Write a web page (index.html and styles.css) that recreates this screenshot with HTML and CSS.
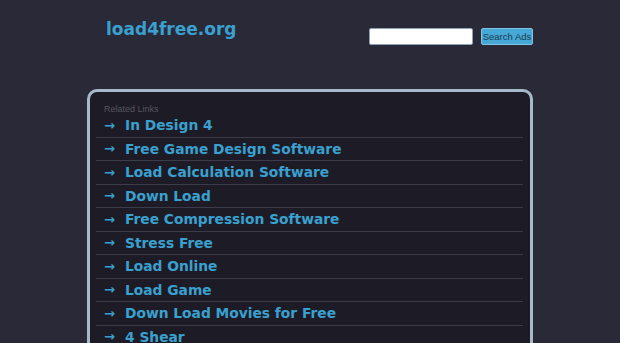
FILE: index.html
```html
<!DOCTYPE html>
<html>
<head>
<meta charset="utf-8">
<link rel="stylesheet" href="styles.css">
</head>
<body>
<div class="wrap">
  <div class="header">
    <div class="logo">load4free.org</div>
    <form class="search">
      <input class="search-input" type="text">
      <button class="search-btn" type="button">Search Ads</button>
    </form>
  </div>
  <div class="panel">
    <div class="panel-title">Related Links</div>
    <ul class="links">
      <li class="link"><span class="arrow">→</span><span class="label">In Design 4</span></li>
      <li class="link"><span class="arrow">→</span><span class="label">Free Game Design Software</span></li>
      <li class="link"><span class="arrow">→</span><span class="label">Load Calculation Software</span></li>
      <li class="link"><span class="arrow">→</span><span class="label">Down Load</span></li>
      <li class="link"><span class="arrow">→</span><span class="label">Free Compression Software</span></li>
      <li class="link"><span class="arrow">→</span><span class="label">Stress Free</span></li>
      <li class="link"><span class="arrow">→</span><span class="label">Load Online</span></li>
      <li class="link"><span class="arrow">→</span><span class="label">Load Game</span></li>
      <li class="link"><span class="arrow">→</span><span class="label">Down Load Movies for Free</span></li>
      <li class="link"><span class="arrow">→</span><span class="label">4 Shear</span></li>
    </ul>
  </div>
</div>
</body>
</html>
```
FILE: styles.css
```css
html, body {
  margin: 0;
  padding: 0;
  background: #2a2938;
  overflow: hidden;
}
body {
  font-family: "DejaVu Sans", sans-serif;
}
.wrap {
  width: 446px;
  margin: 0 auto;
}
.header {
  display: flex;
  justify-content: space-between;
  align-items: flex-start;
  height: 89px;
}
.logo {
  margin: 18px 0 0 19px;
  font-weight: bold;
  font-size: 17px;
  line-height: 22px;
  color: #3aa0cf;
}
.search {
  display: flex;
  gap: 8px;
  margin: 28px 0 0 0;
}
.search-input {
  width: 104px;
  height: 17px;
  box-sizing: border-box;
  border: 1px solid #8fa3b6;
  border-radius: 2px;
  background: #fff;
  padding: 0;
  margin: 0;
}
.search-btn {
  width: 52px;
  height: 17px;
  box-sizing: border-box;
  border: 1px solid #7fc4e4;
  border-radius: 2px;
  background: #45a8d6;
  color: #1d3a50;
  font-family: "Liberation Sans", Arial, sans-serif;
  font-size: 9.5px;
  padding: 0;
  margin: 0;
}
.panel {
  border: 3px solid #a6b9c9;
  border-bottom: none;
  border-radius: 10px 10px 0 0;
  background: #1d1c26;
  padding: 12px 7px 20px 6px;
  height: 300px;
}
.panel-title {
  font-family: "Liberation Sans", Arial, sans-serif;
  font-size: 9px;
  line-height: 10px;
  color: #55545f;
  padding-left: 8px;
}
.links {
  list-style: none;
  margin: 0;
  padding: 0;
}
.link {
  display: flex;
  align-items: center;
  height: 22.5px;
  border-bottom: 1px solid #3c3b49;
  color: #3aa0cf;
  font-weight: bold;
  font-size: 13.8px;
}
.arrow {
  width: 29px;
  padding-left: 8px;
  box-sizing: border-box;
  font-size: 13px;
}
.label {
  white-space: nowrap;
}
```
